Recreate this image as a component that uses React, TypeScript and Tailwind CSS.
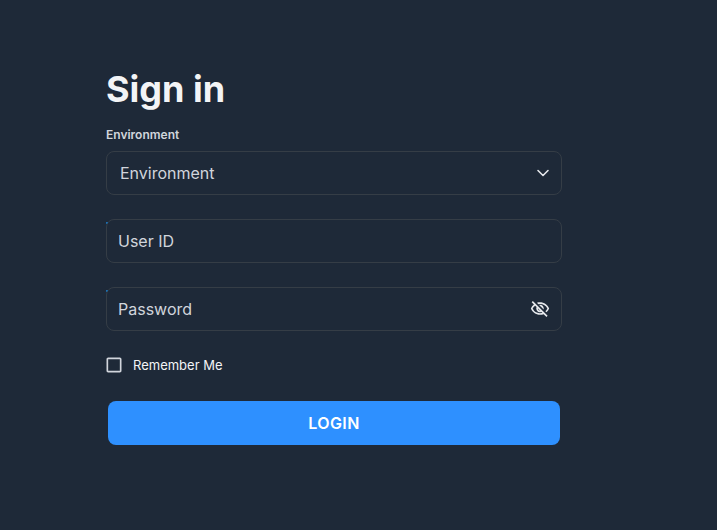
import { useState, type FormEvent } from "react";
import { MdCheckBox, MdCheckBoxOutlineBlank, MdOutlineVisibility, MdOutlineVisibilityOff } from "react-icons/md";

// accent sliver that shows behind the rounded corner of a text field
function CornerAccent() {
  return <span className="absolute top-[2px] -left-px h-[2px] w-[2px] rounded-br-[2px] bg-[#1d6fb0]" />;
}

export default function App() {
  const [showPassword, setShowPassword] = useState(false);
  const [remember, setRemember] = useState(false);

  function handleSubmit(e: FormEvent) {
    e.preventDefault();
  }

  return (
    <div className="min-h-screen bg-[#1e2938] pt-[66px] pl-[106px] font-['Inter',sans-serif] text-white">
      <form onSubmit={handleSubmit} className="flex w-[456px] flex-col">
        <h1 className="text-4xl leading-[46px] font-bold text-[#f3f4f6]">Sign in</h1>
        <span className="mt-[14px] text-xs leading-[18px] font-semibold text-[#d1d5dc]">Environment</span>

        <button
          type="button"
          className="mt-[7px] flex h-11 items-center justify-between rounded-lg border border-[#353d46] pr-[10px] pl-[13px] text-base text-[#d1d5dc]"
        >
          Environment
          <svg className="h-4 w-4 text-[#e5e7eb]" fill="none" stroke="currentColor" strokeWidth={1.6} strokeLinecap="round" strokeLinejoin="round" viewBox="0 0 16 16">
            <path d="M3 5.5L8 10.5L13 5.5" />
          </svg>
        </button>

        <div className="relative mt-6 flex h-11 items-center rounded-lg border border-[#353d46] px-[11px]">
          <CornerAccent />
          <input type="text" placeholder="User ID" className="min-w-0 flex-1 text-base placeholder:text-[#d1d5dc] focus:outline-none" />
        </div>

        <div className="relative mt-6 flex h-11 items-center rounded-lg border border-[#353d46] px-[11px]">
          <CornerAccent />
          <input
            type={showPassword ? "text" : "password"}
            placeholder="Password"
            className="min-w-0 flex-1 text-base placeholder:text-[#d1d5dc] focus:outline-none"
          />
          <button type="button" onClick={() => setShowPassword(!showPassword)} className="text-[#e5e7eb]">
            {showPassword ? <MdOutlineVisibility className="h-5 w-5" /> : <MdOutlineVisibilityOff className="h-5 w-5" />}
          </button>
        </div>

        <button type="button" onClick={() => setRemember(!remember)} className="mt-6 -ml-[2px] flex h-5 items-center gap-[9px] text-[13px]">
          {remember ? <MdCheckBox className="h-5 w-5 text-[#d1d5dc]" /> : <MdCheckBoxOutlineBlank className="h-5 w-5 text-[#d1d5dc]" />}
          <span className="pt-[2px] text-[#f3f4f6]">Remember Me</span>
        </button>

        <button type="submit" className="mx-[2px] mt-[26px] h-11 rounded-lg bg-[#2e90ff] text-base font-semibold tracking-[0.4px]">
          LOGIN
        </button>
      </form>
    </div>
  );
}
